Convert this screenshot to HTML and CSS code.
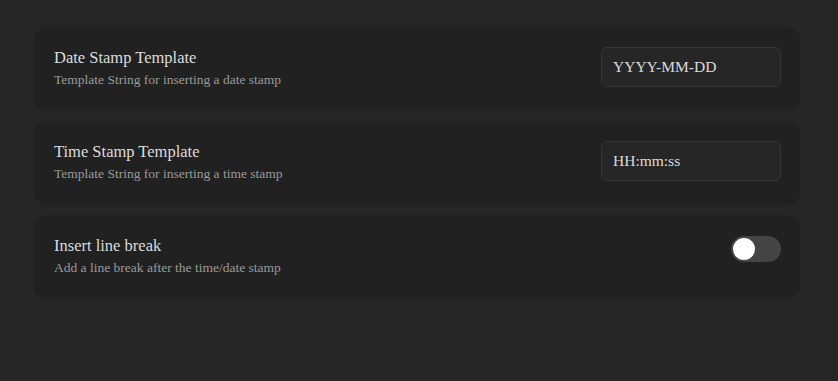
FILE: index.html
```html
<!DOCTYPE html>
<html>
<head>
<meta charset="utf-8">
<link rel="stylesheet" href="styles.css">
</head>
<body>
<div class="list">
  <div class="item">
    <div class="info">
      <div class="name">Date Stamp Template</div>
      <div class="desc">Template String for inserting a date stamp</div>
    </div>
    <div class="input">YYYY-MM-DD</div>
  </div>
  <div class="item">
    <div class="info">
      <div class="name">Time Stamp Template</div>
      <div class="desc">Template String for inserting a time stamp</div>
    </div>
    <div class="input">HH:mm:ss</div>
  </div>
  <div class="item">
    <div class="info">
      <div class="name">Insert line break</div>
      <div class="desc">Add a line break after the time/date stamp</div>
    </div>
    <div class="toggle"><div class="knob"></div></div>
  </div>
</div>
</body>
</html>
```
FILE: styles.css
```css
html, body {
  margin: 0;
  background: #262626;
}
body, .name, .desc, .input {
  font-family: "Liberation Serif", "DejaVu Serif", serif;
}
.list {
  padding: 27px 38px 0 34px;
  display: flex;
  flex-direction: column;
  gap: 10px;
}
.item {
  background: #212121;
  border-radius: 13px;
  height: 84px;
  box-sizing: border-box;
  padding: 0 19px 0 20px;
  display: flex;
  align-items: center;
  justify-content: space-between;
}
.info {
  display: flex;
  flex-direction: column;
  gap: 5px;
  margin-top: -2px;
}
.name {
  color: #dcdcdc;
  font-size: 16.5px;
  line-height: 19px;
}
.desc {
  color: #9a9a9a;
  font-size: 13.5px;
  line-height: 16px;
}
.input {
  width: 180px;
  height: 40px;
  box-sizing: border-box;
  border: 1px solid #353535;
  border-radius: 6px;
  background: #262626;
  color: #dcdcdc;
  font-size: 15.5px;
  padding: 0 11px;
  display: flex;
  align-items: center;
  margin-top: -4px;
}
.toggle {
  width: 50px;
  height: 26px;
  border-radius: 13px;
  background: #444444;
  position: relative;
  margin-top: -16px;
}
.knob {
  position: absolute;
  left: 2px;
  top: 2px;
  width: 22px;
  height: 22px;
  border-radius: 50%;
  background: #ffffff;
}
```
